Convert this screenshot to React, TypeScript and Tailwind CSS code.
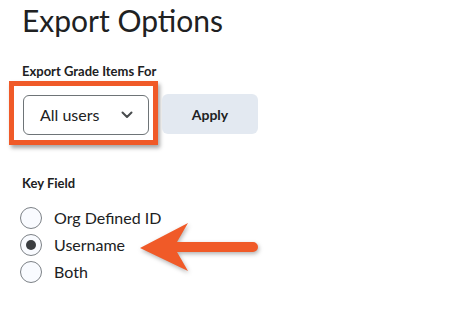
import React from "react";

const font = { fontFamily: "Lato, 'Open Sans', sans-serif" };

function Radio({ label, checked }: { label: string; checked?: boolean }) {
  return (
    <label className="flex h-[27px] items-center gap-[12px]">
      <span className="flex h-[22px] w-[22px] items-center justify-center rounded-full border border-[#7c8186] bg-[#f9fbff]">
        {checked && <span className="h-[10px] w-[10px] rounded-full bg-[#3a3d41]" />}
      </span>
      <span className="text-[16px] text-[#202122]">{label}</span>
    </label>
  );
}

export default function App() {
  return (
    <div className="relative h-[312px] w-[450px] overflow-hidden bg-white" style={font}>
      <div className="flex flex-col pl-[22px] pt-[2px]">
        <h1 className="text-[30px] leading-[36px] text-[#202122]">Export Options</h1>

        <div className="mt-[25px] text-[13px] font-bold leading-[16px] text-[#202122]">
          Export Grade Items For
        </div>

        <div className="mt-[2px] flex items-start">
          {/* orange highlight drawn around the select */}
          <div className="-ml-[13px] border-[5px] border-[#f05a28] pb-[5px] pl-[9px] pr-[4px] pt-[9px] shadow-[2px_3px_4px_rgba(0,0,0,0.35)]">
            <div className="flex h-[40px] w-[126px] items-center justify-between rounded-[6px] border border-[#6e7477] bg-white pl-[16px] pr-[15px]">
              <span className="text-[16px] text-[#202122]">All users</span>
              <svg width="12" height="8" viewBox="0 0 12 8" fill="none">
                <path d="M1.5 1.5 L6 6 L10.5 1.5" stroke="#494c4e" strokeWidth="2" strokeLinecap="round" strokeLinejoin="round" />
              </svg>
            </div>
          </div>
          <button className="ml-[4px] mt-[13px] h-[40px] w-[96px] rounded-[6px] bg-[#e3e9f1] text-[14px] font-bold text-[#202122]">
            Apply
          </button>
        </div>

        <div className="mt-[30px] text-[13px] font-bold leading-[16px] text-[#202122]">Key Field</div>

        <div className="-ml-[2px] mt-[13px] flex flex-col">
          <Radio label="Org Defined ID" />
          <Radio label="Username" checked />
          <Radio label="Both" />
        </div>
      </div>

      {/* annotation arrow */}
      <svg
        className="absolute left-[136px] top-[218px]"
        width="130"
        height="60"
        viewBox="0 0 130 60"
        style={{ filter: "drop-shadow(1px 2px 2px rgba(0,0,0,0.3))" }}
      >
        <path d="M4 30 L52 5 L41 24 L117 24 A5 5 0 0 1 117 34 L41 34 L52 53 Z" fill="#f05a28" />
      </svg>
    </div>
  );
}
